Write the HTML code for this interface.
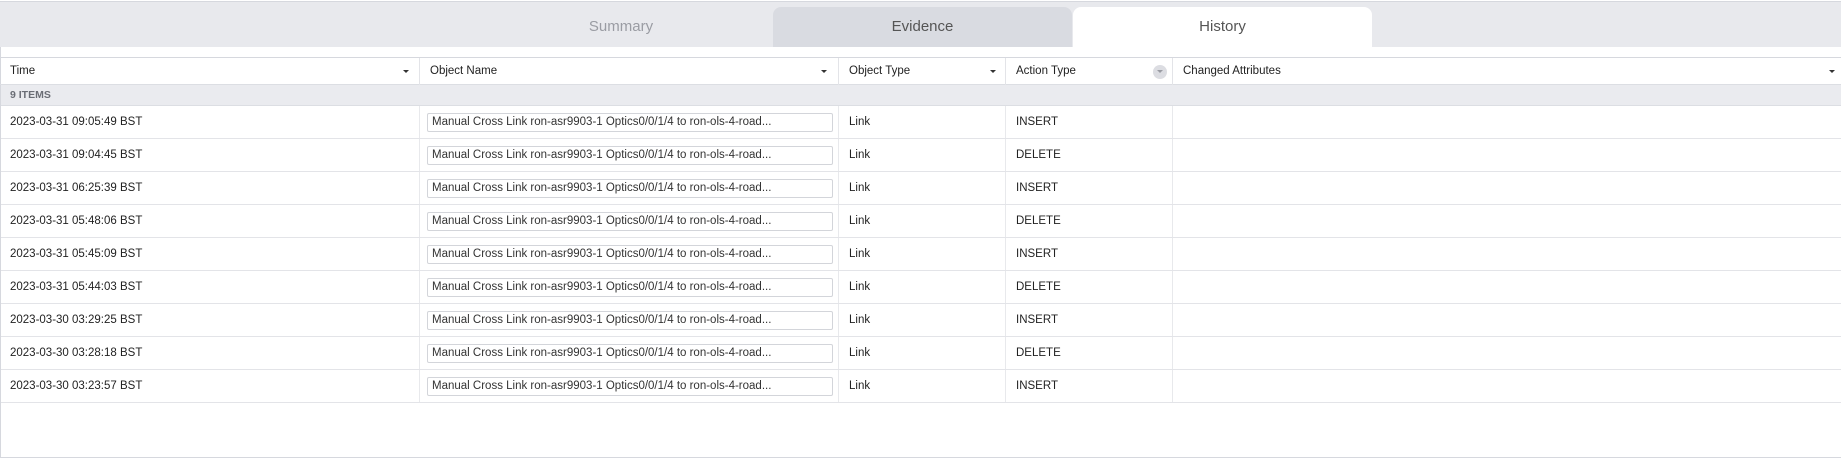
<!DOCTYPE html>
<html><head><style>
*{margin:0;padding:0;box-sizing:border-box}
body{width:1841px;height:462px;background:#fff;font-family:"Liberation Sans",sans-serif;color:#222;position:relative;overflow:hidden}
.abs{position:absolute}
.tabbar{left:0;top:1px;width:1841px;height:46px;background:#e8e9ed;border-top:1px solid #d6d8de}
.tab{top:7px;height:40px;border-radius:8px 8px 0 0;text-align:center;line-height:40px;font-size:15px}
.frame{left:0;top:47px;width:1841px;height:411px;border-left:1px solid #d6d8de;border-bottom:1px solid #d6d8de}
.hdr{left:0;top:57px;width:1841px;height:28px;border-top:1px solid #d6d8de;border-bottom:1px solid #dcdee3;font-size:11.5px}
.hc{position:absolute;top:0;height:27px;line-height:27px;padding-left:10px;border-right:1px solid #e3e4e8}
.arr{position:absolute;top:12px;width:0;height:0;border-left:3px solid transparent;border-right:3px solid transparent;border-top:3px solid #333}
.grp{left:1px;top:85px;width:1840px;height:21px;background:#eaebef;border-bottom:1px solid #dcdee3;font-size:10.5px;font-weight:bold;color:#6a6d75;line-height:20px;padding-left:9px}
.row{left:1px;width:1840px;height:33px;border-bottom:1px solid #e3e4e8;font-size:11.5px}
.c{position:absolute;top:0;height:32px;line-height:32px;border-right:1px solid #e8e9ec}
.inp{position:absolute;left:7px;top:7px;width:406px;height:19px;border:1px solid #d3d5da;border-radius:2px;line-height:17px;padding-left:4px;font-size:11.5px;color:#333;white-space:nowrap;overflow:hidden}
</style></head><body>
<div class="abs tabbar"></div>
<div class="abs tab" style="left:470px;width:302px;color:#9a9ca3">Summary</div>
<div class="abs tab" style="left:773px;width:299px;background:#d9dbe1;color:#555">Evidence</div>
<div class="abs tab" style="left:1073px;width:299px;background:#fff;color:#555">History</div>
<div class="abs frame"></div>
<div class="abs hdr">
<div class="hc" style="left:0;width:420px">Time<span class="arr" style="left:403px"></span></div>
<div class="hc" style="left:420px;width:419px">Object Name<span class="arr" style="left:401px"></span></div>
<div class="hc" style="left:839px;width:167px">Object Type<span class="arr" style="left:151px"></span></div>
<div class="hc" style="left:1006px;width:167px">Action Type<span style="position:absolute;left:147px;top:7px;width:14px;height:14px;border-radius:7px;background:#dcdde2"></span><span class="arr" style="left:151px;top:12px;border-top-color:#9a9ca3"></span></div>
<div class="hc" style="left:1173px;width:668px;border-right:none">Changed Attributes<span class="arr" style="left:656px"></span></div>
</div>
<div class="abs grp">9 ITEMS</div>
<div id="rows"></div>
<script>
var d=[["2023-03-31 09:05:49 BST","INSERT"],["2023-03-31 09:04:45 BST","DELETE"],["2023-03-31 06:25:39 BST","INSERT"],["2023-03-31 05:48:06 BST","DELETE"],["2023-03-31 05:45:09 BST","INSERT"],["2023-03-31 05:44:03 BST","DELETE"],["2023-03-30 03:29:25 BST","INSERT"],["2023-03-30 03:28:18 BST","DELETE"],["2023-03-30 03:23:57 BST","INSERT"]];
var h="";d.forEach(function(r,i){h+='<div class="abs row" style="top:'+(106+i*33)+'px"><div class="c" style="left:0;width:419px;padding-left:9px">'+r[0]+'</div><div class="c" style="left:419px;width:419px"><div class="inp">Manual Cross Link ron-asr9903-1 Optics0/0/1/4 to ron-ols-4-road...</div></div><div class="c" style="left:838px;width:167px;padding-left:10px">Link</div><div class="c" style="left:1005px;width:167px;padding-left:10px">'+r[1]+'</div></div>'});
document.getElementById("rows").innerHTML=h;
</script>
</body></html>
